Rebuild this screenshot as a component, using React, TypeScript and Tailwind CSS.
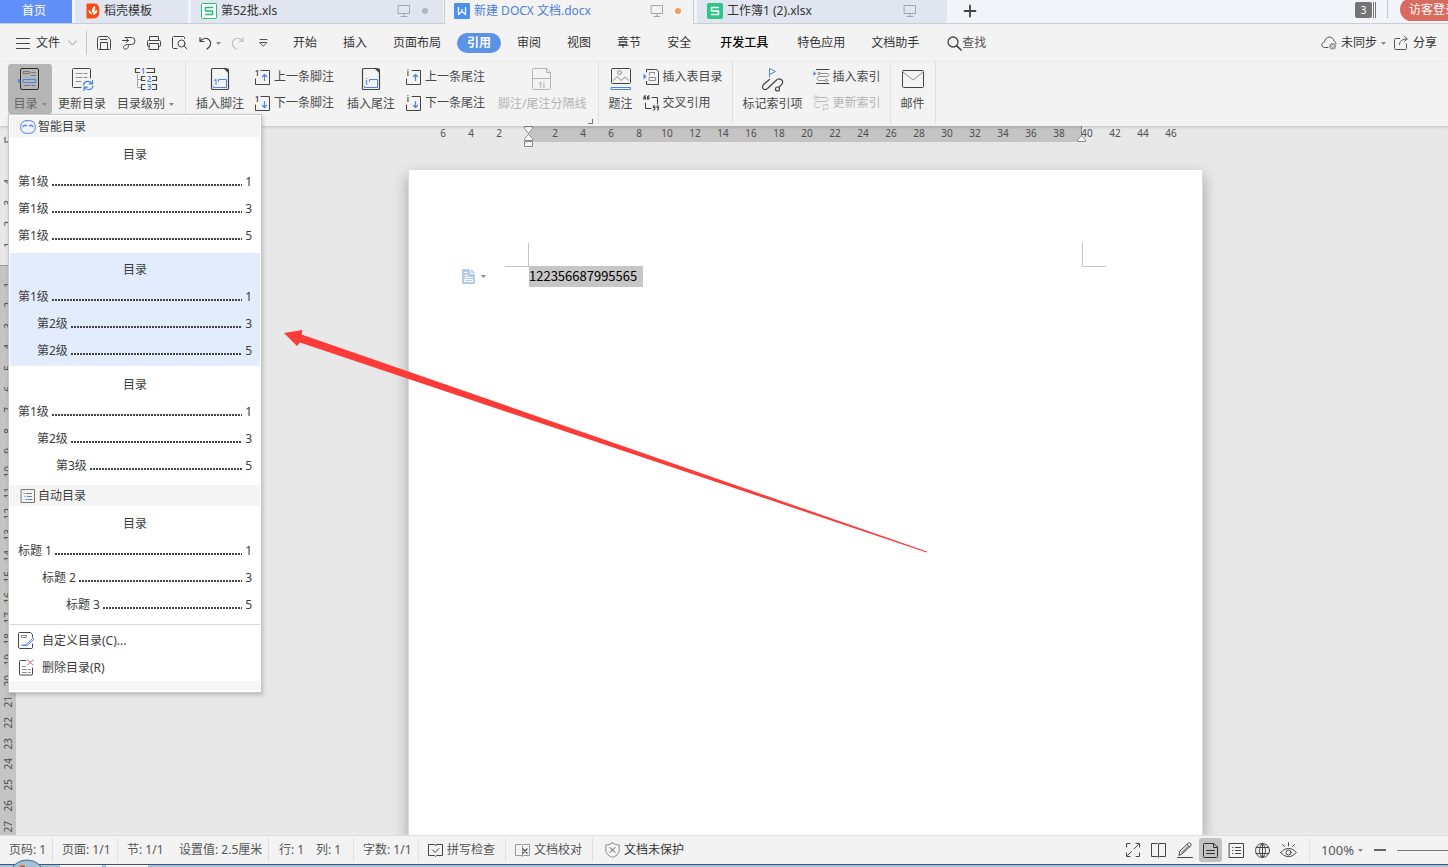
import React, { type ReactNode } from 'react';

const INK = '#444';
const BLUE = '#4a86e0';
const GREY = '#8f8f8f';

function Icon({ w, h, children, stroke = INK }: { w: number; h: number; children: ReactNode; stroke?: string }) {
  return (
    <svg
      width={w}
      height={h}
      viewBox={`0 0 ${w} ${h}`}
      fill="none"
      stroke={stroke}
      strokeWidth={1}
      strokeLinecap="round"
      strokeLinejoin="round"
      className="shrink-0 overflow-visible"
      aria-hidden="true"
    >
      {children}
    </svg>
  );
}

function Digit({ x, y, children, fill = BLUE, size = 8 }: { x: number; y: number; children: ReactNode; fill?: string; size?: number }) {
  return (
    <text x={x} y={y} fill={fill} stroke="none" fontSize={size} textAnchor="middle" fontWeight="600">
      {children}
    </text>
  );
}

function Caret() {
  return (
    <svg width="5" height="3" viewBox="0 0 5 3" className="shrink-0" aria-hidden="true">
      <path d="M0 0h5L2.500 3z" fill="#888" />
    </svg>
  );
}

/* ---------- tab strip ---------- */

function Monitor() {
  return (
    <Icon w={12} h={12} stroke="#a3a6ad">
      <path d="M.5.5h11v8H.5zM6 8.500v2.500M3 11.500h6" />
    </Icon>
  );
}

function SheetLogo({ filled }: { filled: boolean }) {
  return (
    <Icon w={16} h={16} stroke={filled ? '#fff' : '#1fbf7a'}>
      <rect x=".5" y=".5" width="15" height="15" rx="1" fill={filled ? '#2fc58a' : '#fff'} stroke={filled ? '#2fc58a' : '#1fbf7a'} />
      <path d="M11.500 4.500h-7v3.400h7v3.600h-7" strokeWidth="1.500" />
    </Icon>
  );
}

function WriterLogo() {
  return (
    <Icon w={16} h={16} stroke="#fff">
      <rect width="16" height="16" rx="1" fill="#4a90ee" stroke="none" />
      <path d="M4.500 4.500v7L8 8.500l3.500 3v-7M8 8.500v-2" strokeWidth="1.300" />
    </Icon>
  );
}

function DocerLogo() {
  return (
    <svg width="14" height="16" viewBox="0 0 14 16" className="shrink-0" aria-hidden="true">
      <path d="M1.500.5h7C12 .5 13.500 4 13.500 8s-2 7.500-6 7.500h-6c-.6 0-1-.4-1-1v-13c0-.6.4-1 1-1z" fill="#fa4b14" />
      <path d="M6 9.500C5.500 6.500 7 4 8.800 2.800c1 2 .4 5-1.300 7zM2.500 7.200c1.500 0 2.600 1 3 2.800l.3 1.500C3.800 11 2.500 9.500 2.500 7.200zM7 12c.3-2.800 2-4.600 4.500-5-.2 3-1.800 4.800-4.500 5z" fill="#fff" />
    </svg>
  );
}

function TabStrip() {
  return (
    <nav aria-label="文档标签" className="flex h-6 shrink-0 border-b border-[#c9cdd8] bg-[#f2f4f9]">
      <button className="flex w-[72px] items-center justify-center bg-[#608ffa] pr-1 pb-px text-white">首页</button>
      <button className="ml-[3px] flex w-[113px] items-center gap-1 bg-[#e1e5ef] pb-px pl-[11px]">
        <DocerLogo />
        稻壳模板
      </button>
      <button className="ml-[3px] flex w-[252px] items-center gap-1 bg-[#e1e5ef] pr-[15px] pb-px pl-[10px]">
        <SheetLogo filled={false} />
        <span className="flex-1 text-left">第52批.xls</span>
        <Monitor />
        <span className="ml-2 size-[6px] rounded-full bg-[#b4b7bf]" />
      </button>
      <button className="-mb-px ml-px flex w-[250px] items-center gap-1 border-x border-[#c9cdd8] bg-[#f3f3f3] pr-3 pb-[2px] pl-[9px] text-[#4a80dc]">
        <WriterLogo />
        <span className="flex-1 text-left">新建 DOCX 文档.docx</span>
        <Monitor />
        <span className="ml-2 size-[6px] rounded-full bg-[#e9a15c]" />
      </button>
      <button className="ml-[3px] flex w-[250px] items-center gap-1 bg-[#e1e5ef] pr-[31px] pb-px pl-[10px]">
        <SheetLogo filled />
        <span className="flex-1 text-left">工作簿1 (2).xlsx</span>
        <Monitor />
      </button>
      <button aria-label="新建标签" className="flex w-[46px] items-center justify-center pb-[2px]">
        <Icon w={12} h={12} stroke="#444">
          <path d="M6 .5v11M.5 6h11" strokeWidth="1.800" />
        </Icon>
      </button>
      <div className="ml-auto flex items-start">
        <button aria-label="标签列表" className="mt-[2px] flex h-4 items-center gap-px">
          <span className="flex h-4 w-[17px] items-center justify-center rounded-[2px] bg-[#747474] text-[10px] text-white">3</span>
          <span className="h-4 w-px bg-[#777]" />
          <span className="h-4 w-px bg-[#777]" />
        </button>
        <span className="ml-[11px] h-[18px] w-px bg-[#c4c6cc]" />
        <div className="ml-3 flex w-12 overflow-hidden">
          <button className="-mt-[2px] h-[23px] w-[72px] shrink-0 rounded-full bg-[#d96b5e] pl-[9px] text-left whitespace-nowrap text-white">访客登录</button>
        </div>
      </div>
    </nav>
  );
}

/* ---------- menu bar ---------- */

const menusBefore = ['开始', '插入', '页面布局'];
const menusAfter = ['审阅', '视图', '章节', '安全'];

function MenuItem({ label }: { label: string }) {
  return <button className="px-[13px] leading-5 whitespace-nowrap">{label}</button>;
}

function MenuBar() {
  return (
    <div className="flex h-[38px] shrink-0 items-center bg-[#f3f3f3] pl-4">
      <button className="flex items-center gap-[6px]">
        <Icon w={14} h={12}>
          <path d="M.5 1.500h13M.5 6.500h13M.5 11.500h13" />
        </Icon>
        文件
        <span className="ml-[2px] flex">
          <Icon w={9} h={6} stroke="#999">
            <path d="M.5.8l4 4.200 4-4.200" />
          </Icon>
        </span>
      </button>
      <span className="ml-[9px] h-6 w-px bg-[#c6c6c6]" />
      <div className="ml-[10px] flex items-center gap-[11px]">
        <button aria-label="保存">
          <Icon w={14} h={14}>
            <path d="M.5 2.500c0-1.200.8-2 2-2h8l3 3v9c0 .6-.4 1-1 1h-11c-.6 0-1-.4-1-1zM3.500 13.500v-7h7v7M3.500 3.500h6.500" />
          </Icon>
        </button>
        <button aria-label="输出为PDF">
          <Icon w={14} h={14}>
            <path d="M.5 4.500h6M4.500 2.500l2 2-2 2M3 1.500h6.500a3.500 3.500 0 0 1 0 7H7.500c-1 0-1 .5-1 1 0 4.500-5 4.500-5 2 0-2 2-3 6-3" />
          </Icon>
        </button>
        <button aria-label="打印">
          <Icon w={14} h={14}>
            <path d="M2.500 4.500v-4h9v4M2.500 10.500h-1c-.6 0-1-.4-1-1v-4c0-.6.400-1 1-1h11c.6 0 1 .4 1 1v4c0 .6-.4 1-1 1h-1M2.500 7.500h9v6h-9z" />
          </Icon>
        </button>
        <button aria-label="打印预览">
          <Icon w={16} h={14}>
            <path d="M5 12.500H1.500c-.6 0-1-.4-1-1v-10c0-.6.400-1 1-1h10c.6 0 1 .4 1 1v1M12 10l3 3" />
            <circle cx="9.500" cy="7.500" r="3.500" />
          </Icon>
        </button>
      </div>
      <button aria-label="撤销" className="ml-[11px] flex items-center gap-1">
        <Icon w={13} h={14}>
          <path d="M1 1.500v4h4M1.200 5.300C3.500 2.500 7 1.700 9.500 3.200c3 1.900 2.600 6 .4 8L8 13" strokeWidth="1.200" />
        </Icon>
        <Caret />
      </button>
      <button aria-label="恢复" className="ml-[10px]">
        <Icon w={13} h={14} stroke="#c0c0c0">
          <path d="M12 1.500v4H8M11.800 5.300C9.500 2.500 6 1.700 3.500 3.200c-3 1.900-2.600 6-.4 8L5 13" strokeWidth="1.200" />
        </Icon>
      </button>
      <button aria-label="更多" className="ml-[15px]">
        <Icon w={9} h={8} stroke="#555">
          <path d="M1 .5h7M1 3.500h7L4.500 7z" />
        </Icon>
      </button>
      <div className="ml-3 flex items-center">
        {menusBefore.map((m) => (
          <MenuItem key={m} label={m} />
        ))}
        <button className="mx-[3px] rounded-full bg-[#5c93e6] px-[10px] leading-5 font-bold whitespace-nowrap text-white">引用</button>
        {menusAfter.map((m) => (
          <MenuItem key={m} label={m} />
        ))}
        <button className="px-4 leading-5 font-medium whitespace-nowrap text-black">开发工具</button>
        <MenuItem label="特色应用" />
        <MenuItem label="文档助手" />
      </div>
      <button className="ml-[15px] flex items-center whitespace-nowrap text-[#555]">
        <Icon w={15} h={15}>
          <circle cx="6" cy="6" r="5" strokeWidth="1.300" />
          <path d="M9.800 9.800l4.200 4.200" strokeWidth="1.700" />
        </Icon>
        查找
      </button>
      <div className="ml-auto flex items-center pr-[11px] whitespace-nowrap">
        <button className="flex items-center gap-1">
          <Icon w={16} h={14} stroke="#555">
            <path d="M7 11.500H3.800C-.2 11.500 0 6.500 3.500 6 4.200-.3 12-.3 13 5c1.200.6 2 1.700 2 3" />
            <circle cx="11.700" cy="10.300" r="3.300" fill="#999" stroke="none" />
            <path d="M10.500 9.100l2.400 2.400m0-2.400l-2.400 2.400" stroke="#fff" strokeWidth=".9" />
          </Icon>
          未同步
          <Caret />
        </button>
        <button className="ml-2 flex items-center gap-[5px]">
          <Icon w={14} h={14} stroke="#555">
            <path d="M5.500 2.500h-4c-.6 0-1 .4-1 1v9c0 .6.400 1 1 1h10c.6 0 1-.4 1-1V8M5.500 8.500C5.500 5 8 3.200 13 3M10.500.5L13.200 3l-2.700 2.400" />
          </Icon>
          分享
        </button>
      </div>
    </div>
  );
}

/* ---------- ribbon ---------- */

function BigButton({ icon, label, muted, caret, className = '' }: { icon: ReactNode; label: string; muted?: boolean; caret?: boolean; className?: string }) {
  return (
    <button className={`flex h-[50px] flex-col items-center justify-between pt-[3px] pb-[2px] whitespace-nowrap ${muted ? 'text-[#b4b4b4]' : ''} ${className}`}>
      {icon}
      <span className="flex items-center gap-1 leading-4">
        {label}
        {caret && <Caret />}
      </span>
    </button>
  );
}

function SmallButton({ icon, label, muted }: { icon: ReactNode; label: string; muted?: boolean }) {
  return (
    <button className={`flex h-[26px] items-center gap-[3px] leading-4 whitespace-nowrap ${muted ? 'text-[#b4b4b4]' : ''}`}>
      {icon}
      {label}
    </button>
  );
}

function Divider() {
  return <span className="h-[62px] w-px shrink-0 bg-[#e0e0e0]" />;
}

function TocIcon() {
  return (
    <Icon w={24} h={24} stroke="#2d2d2d">
      <rect x="2.500" y="1.500" width="18" height="21" rx="1.500" />
      <path d="M5.500 4.500h6v2h-6zM13.500 5.500h4M13.500 8.500h4M6 18.500h6M14 18.500h3" stroke="#777" />
      <path d="M5.500 12.500h12v3h-12z" stroke={BLUE} />
      <path d="M0 11.500v5l3-2.500z" fill={BLUE} stroke="none" />
    </Icon>
  );
}

function RefreshTocIcon() {
  return (
    <Icon w={24} h={24}>
      <path d="M11 20.500H3.500c-.6 0-1-.4-1-1v-17c0-.6.400-1 1-1h16c.6 0 1 .4 1 1V11" />
      <path d="M6 6.500h6M14 6.500h3M6 10.500h6M14 10.500h3M6 14.500h5" stroke={GREY} />
      <path d="M13.500 18c.5-4 6-5 8.500-1.500M22.500 13.500v3.300h-3.300M23 19c-.5 4-6 5-8.500 1.500M14 23.500v-3.300h3.300" stroke={BLUE} strokeWidth="1.200" />
    </Icon>
  );
}

function LevelsIcon() {
  return (
    <Icon w={24} h={24}>
      <path d="M3.500 7v13.500h4M3.500 12.500h4" stroke="#aaa" />
      <path d="M5.500 1.500h-4v4h4M13 5.500h7.500v-4H13" strokeWidth="1.200" />
      <path d="M11 9.500H7.500v4H11M18.500 13.500h4v-4h-4" strokeWidth="1.200" />
      <path d="M11 17.500H7.500v5H11M18.500 22.500h4v-5h-4" strokeWidth="1.200" />
      <Digit x={9} y={6.500}>1</Digit>
      <Digit x={15} y={14.500}>2</Digit>
      <Digit x={15} y={23}>3</Digit>
    </Icon>
  );
}

function NoteIcon({ end }: { end?: boolean }) {
  return (
    <Icon w={24} h={24}>
      <path d="M16.500 1.500h-12c-.6 0-1 .4-1 1v19c0 .6.400 1 1 1h15c.6 0 1-.4 1-1v-16z" strokeWidth="1.200" />
      <path d="M16.500 1.500l4 4v-3z" fill={INK} />
      <path d="M10.500 14.500v-2h8v8h-13v-1" stroke={BLUE} />
      <Digit x={7.500} y={17.500}>{end ? 'i' : '1'}</Digit>
    </Icon>
  );
}

function StepIcon({ up, end }: { up?: boolean; end?: boolean }) {
  return (
    <Icon w={17} h={17}>
      <Digit x={3} y={7} fill={INK}>{end ? 'i' : '1'}</Digit>
      <path d="M7 1.500h8.500v14h-14V10" />
      <path d={up ? 'M10.500 11.500v-6M8.500 7.500l2-2 2 2' : 'M10.500 6.500v6M8.500 10.500l2 2 2-2'} stroke={BLUE} strokeWidth="1.200" />
    </Icon>
  );
}

function SeparatorNoteIcon() {
  return (
    <Icon w={24} h={24} stroke="#b4b4b4">
      <path d="M16.500 1.500h-13c-.6 0-1 .4-1 1v19c0 .6.400 1 1 1h16c.6 0 1-.4 1-1v-16zM16.500 1.500v4h4M3 11.500h17" />
      <Digit x={11.500} y={20.500} fill="#b4b4b4">1i</Digit>
    </Icon>
  );
}

function CaptionIcon() {
  return (
    <Icon w={22} h={24}>
      <rect x="1.500" y="1.500" width="19" height="15" rx="1" />
      <path d="M3 13.500l4.500-4 3.500 4 4-3.500 4 3.500" stroke={GREY} />
      <circle cx="9.500" cy="5.500" r="2" stroke={GREY} />
      <path d="M1.500 20.500h19v2h-19z" stroke={BLUE} />
    </Icon>
  );
}

function FigureListIcon() {
  return (
    <Icon w={17} h={16}>
      <path d="M3.500 3V.5h9c2 0 3 1 3 3v12h-12v-3" />
      <path d="M6.500 6V3.500h5V5M6.500 8.500h6v3h-6z" stroke={GREY} />
      <path d="M.5 4.500v6l3-3z" fill={BLUE} stroke="none" />
    </Icon>
  );
}

function CrossRefIcon() {
  return (
    <Icon w={17} h={16}>
      <path d="M9 2.500h5.500V9M2.500 8v5.500H8" />
      <path d="M2.500.8C1 1 .8 2.300.8 4h1.600V2.500M6 .8C4.500 1 4.300 2.300 4.300 4h1.600V2.500M12 11h-1.600v1.500H12c0 1-.4 2-1.200 2.500M15.700 11h-1.600v1.500h1.600c0 1-.4 2-1.200 2.500" strokeWidth="1.200" />
    </Icon>
  );
}

function MarkIndexIcon() {
  return (
    <Icon w={26} h={26}>
      <path d="M9.500 12.500L4 17c-3.500 3.500 0 7.500 3.500 4.500L16 13.500c3.500-3.500 8.500 0 6 3.500-.8 1.200-2 2-3.200 3.300" strokeWidth="1.200" />
      <circle cx="17.500" cy="22" r="2" strokeWidth="1.200" />
      <path d="M9.500 10V1.500l6 3-6 3" stroke={BLUE} />
    </Icon>
  );
}

function InsertIndexIcon() {
  return (
    <Icon w={17} h={16}>
      <path d="M3.500.5H16M3.500 14.500H16" />
      <path d="M7 4.500h7c2.500 0 2.500 3 0 3H6c-2.500 0-2.500 4 0 4h6" stroke={GREY} />
      <circle cx="6" cy="4.500" r="1.300" stroke={GREY} />
      <circle cx="13.500" cy="11.500" r="1.300" stroke={GREY} />
      <path d="M.5 2v5l2.700-2.500z" fill={BLUE} stroke="none" />
    </Icon>
  );
}

function RefreshIndexIcon() {
  return (
    <Icon w={17} h={16} stroke="#b8b8b8">
      <circle cx="3" cy="2.500" r="1.700" />
      <path d="M5 2.500h8c2.500 0 2.500 4 0 4H4c-3.500 0-3.500 6 0 6h2.500M9.500 11.500c.5-2 3.500-2.500 5-.7V9M15.500 12.500c-.5 2-3.500 2.500-5 .7V15" />
    </Icon>
  );
}

function MailIcon() {
  return (
    <Icon w={24} h={24}>
      <rect x="1.500" y="3.500" width="21" height="17" rx="1" />
      <path d="M2.500 5.500L12 13l9.500-7.500" stroke={GREY} />
    </Icon>
  );
}

function Ribbon() {
  return (
    <div className="relative z-20 flex h-16 shrink-0 items-start bg-[#f3f3f3] pl-2 text-[#4a4a4a] shadow-[0_1px_3px_rgba(0,0,0,0.18)]">
      <div className="relative mt-[2px]">
        <BigButton className="w-11 rounded-[3px] bg-[#b6b6b6] text-[#666]" icon={<TocIcon />} label="目录" caret />
        <TocMenu />
      </div>
      <div className="mt-[2px] flex">
        <BigButton className="w-[60px]" icon={<RefreshTocIcon />} label="更新目录" />
        <BigButton className="mr-[6px] w-[67px]" icon={<LevelsIcon />} label="目录级别" caret />
      </div>
      <Divider />
      <div className="mt-[2px] flex gap-[10px] pr-[11px] pl-[10px]">
        <BigButton icon={<NoteIcon />} label="插入脚注" />
        <div>
          <SmallButton icon={<StepIcon up />} label="上一条脚注" />
          <SmallButton icon={<StepIcon />} label="下一条脚注" />
        </div>
        <BigButton className="ml-[3px]" icon={<NoteIcon end />} label="插入尾注" />
        <div>
          <SmallButton icon={<StepIcon up end />} label="上一条尾注" />
          <SmallButton icon={<StepIcon end />} label="下一条尾注" />
        </div>
        <div className="relative ml-[3px]">
          <BigButton icon={<SeparatorNoteIcon />} label="脚注/尾注分隔线" muted />
          <span className="absolute -right-[6px] -bottom-2 size-[5px] border-r border-b border-[#777]" />
        </div>
      </div>
      <Divider />
      <div className="mt-[2px] flex gap-[10px] pr-[9px] pl-[10px]">
        <BigButton icon={<CaptionIcon />} label="题注" />
        <div>
          <SmallButton icon={<FigureListIcon />} label="插入表目录" />
          <SmallButton icon={<CrossRefIcon />} label="交叉引用" />
        </div>
      </div>
      <Divider />
      <div className="mt-[2px] flex gap-[10px] pr-[9px] pl-[10px]">
        <BigButton icon={<MarkIndexIcon />} label="标记索引项" />
        <div>
          <SmallButton icon={<InsertIndexIcon />} label="插入索引" />
          <SmallButton icon={<RefreshIndexIcon />} label="更新索引" muted />
        </div>
      </div>
      <Divider />
      <div className="mt-[2px] flex px-[10px]">
        <BigButton icon={<MailIcon />} label="邮件" />
      </div>
      <Divider />
    </div>
  );
}

/* ---------- table-of-contents menu ---------- */

type Line = { text: string; page: number; pad: string };

const flat: Line[] = [
  { text: '第1级', page: 1, pad: 'pl-2' },
  { text: '第1级', page: 3, pad: 'pl-2' },
  { text: '第1级', page: 5, pad: 'pl-2' },
];
const twoLevels: Line[] = [
  { text: '第1级', page: 1, pad: 'pl-2' },
  { text: '第2级', page: 3, pad: 'pl-[27px]' },
  { text: '第2级', page: 5, pad: 'pl-[27px]' },
];
const threeLevels: Line[] = [
  { text: '第1级', page: 1, pad: 'pl-2' },
  { text: '第2级', page: 3, pad: 'pl-[27px]' },
  { text: '第3级', page: 5, pad: 'pl-[46px]' },
];
const headings: Line[] = [
  { text: '标题 1', page: 1, pad: 'pl-2' },
  { text: '标题 2', page: 3, pad: 'pl-8' },
  { text: '标题 3', page: 5, pad: 'pl-[56px]' },
];

function TocPreview({ lines, active }: { lines: Line[]; active?: boolean }) {
  return (
    <button role="menuitem" className={`flex w-full flex-col pt-[3px] pb-[2px] leading-[27px] ${active ? 'bg-[#e2ecfd]' : ''}`}>
      <span className="w-full text-center">目录</span>
      {lines.map((l, i) => (
        <span key={i} className={`flex w-full items-center pr-2 ${l.pad}`}>
          {l.text}
          <span className="mx-[3px] mt-[7px] h-[2px] flex-1 bg-[repeating-linear-gradient(90deg,#444_0_2px,transparent_2px_3px)]" />
          {l.page}
        </span>
      ))}
    </button>
  );
}

function MenuHeading({ icon, label }: { icon: ReactNode; label: string }) {
  return (
    <div className="flex h-[21px] items-center bg-[#f4f4f4] pl-2">
      <span className="flex w-5 justify-center">{icon}</span>
      {label}
    </div>
  );
}

function TocMenu() {
  return (
    <div role="menu" className="absolute top-full left-0 w-[254px] border border-[#c8c8c8] bg-white p-px text-[#3c3c3c] shadow-[1px_2px_4px_rgba(0,0,0,0.2)]">
      <MenuHeading
        icon={
          <Icon w={16} h={14} stroke="#4d84f0">
            <rect x=".7" y=".7" width="14.600" height="12.600" rx="5.500" />
            <path d="M3 6.500l2-1.300 1.500.8M9.500 6l1.500-.8 2 1.300" strokeWidth="1.400" />
          </Icon>
        }
        label="智能目录"
      />
      <div className="mt-px mb-1 flex flex-col gap-[2px]">
        <TocPreview lines={flat} />
        <TocPreview lines={twoLevels} active />
        <TocPreview lines={threeLevels} />
      </div>
      <MenuHeading
        icon={
          <Icon w={14} h={14} stroke="#777">
            <path d="M.5.5h13v13H.5zM3 4.500h.5M5.500 4.500h5M5 10.500h.5M7 10.500h4" />
            <path d="M4 7.500h.5M6.500 7.500h4" stroke="#4d84f0" />
          </Icon>
        }
        label="自动目录"
      />
      <div className="mt-px mb-1">
        <TocPreview lines={headings} />
      </div>
      <div className="border-t border-[#d9d9d9] pt-[2px]">
        <button role="menuitem" className="flex h-[27px] w-full items-center gap-2 pl-2">
          <Icon w={16} h={17}>
            <path d="M14.500 12v3.500c0 .6-.4 1-1 1H2l-1.500-1V1.500c0-.6.400-1 1-1h11l2 2V5" />
            <path d="M3.500 3.500h5v2h-5z" stroke={GREY} />
            <path d="M3.500 13h4l7.500-7 .8 1.500L9 13.500H5" stroke={BLUE} />
          </Icon>
          自定义目录(C)...
        </button>
        <button role="menuitem" className="flex h-[27px] w-full items-center gap-2 pl-2">
          <Icon w={16} h={17}>
            <path d="M8 1.500H2.500c-.6 0-1 .4-1 1v12.500c0 .6.400 1 1 1h11c.6 0 1-.4 1-1V9" />
            <path d="M4.500 7.500h3M4.500 10.500h4M10.500 10.500h2M4.500 13.500h4M10.500 13.500h2" stroke={GREY} />
            <path d="M9.500 1l5.500 5M15 1L9.500 6" stroke="#e0605c" />
          </Icon>
          删除目录(R)
        </button>
      </div>
      <div className="mb-px h-[9px] bg-[#f6f6f6]" />
    </div>
  );
}

/* ---------- workspace ---------- */

const rulerMarks = ['6', '4', '2', '', ...Array.from({ length: 23 }, (_, i) => String((i + 1) * 2))];
const sideMarksUp = ['4', '3', '2', '1'];
const sideMarksDown = Array.from({ length: 27 }, (_, i) => String(i + 1));

function SideMark({ label }: { label: string }) {
  return (
    <span className="flex flex-1 items-center justify-center">
      <span className="rotate-180 leading-none [writing-mode:vertical-rl]">{label}</span>
    </span>
  );
}

function Workspace() {
  return (
    <main className="relative flex min-h-0 flex-1 overflow-hidden bg-[#e8e8e8]">
      <div className="flex w-4 shrink-0 flex-col text-[10px] text-[#4f4f4f]">
        <div className="flex h-[45px] shrink-0 pt-[11px] pl-1">
          <span className="size-[6px] border-b-2 border-l-2 border-[#999]" />
        </div>
        <div className="flex h-[84px] shrink-0 flex-col">
          {sideMarksUp.map((m) => (
            <SideMark key={m} label={m} />
          ))}
        </div>
        <div className="mt-[10px] flex min-h-0 flex-1 flex-col border-t border-[#999] bg-[#c4c4c4] pt-2">
          <div className="flex h-[563px] shrink-0 flex-col">
            {sideMarksDown.map((m) => (
              <SideMark key={m} label={m} />
            ))}
          </div>
        </div>
      </div>
      <div className="flex min-w-0 flex-1 flex-col">
        <div className="relative flex h-4 shrink-0 bg-[linear-gradient(90deg,transparent_512px,#c4c4c4_512px_1066px,transparent_1066px)] pl-[413px] text-[10px] leading-[15px] text-[#4f4f4f]">
          {rulerMarks.map((m, i) => (
            <span key={i} className="w-7 shrink-0 text-center">
              {m}
            </span>
          ))}
          <svg width="10" height="22" viewBox="0 0 10 22" className="absolute top-0 left-[508px]" fill="#f8f8f8" stroke="#888" aria-hidden="true">
            <path d="M.5.500h8v2L4.500 7.500l-4-5zM4.500 8.500l4 4v2h-8v-2zM.5 15.500h8v5h-8z" />
          </svg>
          <svg width="10" height="17" viewBox="0 0 10 17" className="absolute top-0 left-[1061px]" fill="#f8f8f8" stroke="#888" aria-hidden="true">
            <path d="M4.500 0v10l4 3.500v2h-8v-2l4-3.500" />
          </svg>
        </div>
        <article className="mt-7 ml-[392px] flex w-[795px] flex-1 flex-col border-x border-[#dcdcdc] bg-white pt-[73px] shadow-[0_6px_14px_rgba(0,0,0,0.32)]">
          <div className="flex justify-between px-24">
            <span className="size-6 border-r border-b border-[#c4c4c4]" />
            <span className="size-6 border-b border-l border-[#c4c4c4]" />
          </div>
          <div className="-mt-px flex h-[21px] items-center pl-[53px]">
            <button aria-label="目录选项" className="flex w-[67px] items-center gap-[6px]">
              <svg width="13" height="15" viewBox="0 0 13 15" aria-hidden="true">
                <path d="M0 0h9l4 4v11H0z" fill="#b5cbea" />
                <path d="M8.500 0v4.500H13M2.500 3.500h3M2.500 6.500h4M2.500 8.500h8M2.500 10.500h8v2h-8z" fill="none" stroke="#fff" />
              </svg>
              <Caret />
            </button>
            <p className="h-[21px] bg-[#c6c6c6] pr-[6px] font-['Noto_Sans_CJK_SC',sans-serif] text-[13px] leading-5 text-black">122356687995565</p>
          </div>
        </article>
      </div>
      <svg width="650" height="230" viewBox="0 0 650 230" className="absolute top-[199px] left-[280px]" aria-hidden="true">
        <path d="M4 8L22.500 5l-1 4.500L647 226.500l-.4 1L20 17.500 17 21z" fill="#fc3a38" />
      </svg>
    </main>
  );
}

/* ---------- status bar ---------- */

function StatusDivider() {
  return <span className="h-6 w-px shrink-0 bg-[#e0e0e0]" />;
}

function StatusBar() {
  return (
    <footer className="flex h-[29px] shrink-0 items-center border-t border-[#dedede] bg-[#f3f3f3] whitespace-nowrap text-[#555]">
      <span className="w-[52px] pl-[9px]">页码: 1</span>
      <StatusDivider />
      <span className="w-16 pl-[9px]">页面: 1/1</span>
      <StatusDivider />
      <span className="w-[61px] pl-[9px]">节: 1/1</span>
      <span className="w-[89px]">设置值: 2.5厘米</span>
      <StatusDivider />
      <span className="w-[47px] pl-[10px]">行: 1</span>
      <span className="w-[37px]">列: 1</span>
      <StatusDivider />
      <span className="w-16 pl-[9px]">字数: 1/1</span>
      <StatusDivider />
      <button className="flex w-[86px] items-center gap-1 pl-[9px]">
        <Icon w={15} h={13}>
          <path d="M7.500 1.500l-1-1h-6v11h6l1 1 1-1h6V.5h-6zM4.500 6L7 8.500 11 4.500" />
        </Icon>
        拼写检查
      </button>
      <StatusDivider />
      <button className="flex w-[86px] items-center gap-1 pl-[9px]">
        <Icon w={15} h={13} stroke="#999">
          <path d="M7.500 12V1.500l-1-1h-6v11h6l1 1 1-1h6V.5h-6l-1 1" />
          <path d="M8 5l4 4M12 5L8 9" stroke="#444" strokeWidth="1.200" />
        </Icon>
        文档校对
      </button>
      <StatusDivider />
      <button className="flex items-center gap-1 pl-3 text-[#333]">
        <Icon w={15} h={16} stroke="#888">
          <path d="M7.500.7C5.500 2.500 3 3 .8 3v5c0 4 3.700 6.500 6.700 7.300 3-.8 6.700-3.300 6.700-7.300V3c-2.200 0-4.700-.5-6.700-2.300z" />
          <path d="M5 5.500l5 5M10 5.500l-5 5" stroke="#555" />
        </Icon>
        文档未保护
      </button>
      <div className="ml-auto flex items-center">
        <button aria-label="全屏显示" className="flex w-[26px] justify-center">
          <Icon w={14} h={14}>
            <path d="M.5 4V.5H4M10 .5h3.500V4M13.500 10v3.500H10M4 13.500H.5V10M8.500 5.500l4-4M1.500 12.500l4-4" />
          </Icon>
        </button>
        <button aria-label="阅读版式" className="flex w-[26px] justify-center">
          <Icon w={16} h={15}>
            <path d="M7.500 1.500l-1-1h-6v13h6l1 1 1-1h6V.5h-6zv12" />
          </Icon>
        </button>
        <button aria-label="写作模式" className="mr-px flex w-[26px] justify-center">
          <Icon w={16} h={16}>
            <path d="M2 13l1-4 8.500-8c1.500-.5 3 1 2.500 2.500l-8.500 8zM10 2.500l2.500 2.500M5 10.500l6-6M.5 15.500h15" />
          </Icon>
        </button>
        <button aria-label="页面视图" className="flex h-6 w-[23px] items-center justify-center rounded-[3px] bg-[#c2c2c2]">
          <Icon w={15} h={15} stroke="#2f2f2f">
            <path d="M1.500.5h9.500l3.500 3.500v9.500c0 .6-.4 1-1 1h-12c-.6 0-1-.4-1-1v-12c0-.6.400-1 1-1zM3.500 7.500h8M3.500 10.500h8M10.500.5v4h4" />
          </Icon>
        </button>
        <button aria-label="大纲" className="flex w-[29px] justify-center">
          <Icon w={15} h={15}>
            <path d="M.5.5h14v14H.5zM3.500 4.500h.5M6.500 4.500h5M3.500 7.500h.5M6.500 7.500h5M3.500 10.500h.5M6.500 10.500h5" />
          </Icon>
        </button>
        <button aria-label="Web版式" className="flex w-[23px] justify-center">
          <Icon w={15} h={15}>
            <circle cx="7.500" cy="7.500" r="7" />
            <path d="M7.500.5v14M1.500 4.500h12M1.500 10.500h12M7.500.5c-4 3.500-4 10.500 0 14 4-3.500 4-10.500 0-14" />
          </Icon>
        </button>
        <button aria-label="护眼模式" className="flex w-[29px] justify-center">
          <Icon w={17} h={16}>
            <path d="M.8 10.500c4-5.500 11.400-5.500 15.400 0-4 5.500-11.400 5.500-15.400 0zM8.500.8v3M2.500 2.500l2 2M14.500 2.500l-2 2" />
            <circle cx="8.500" cy="10.500" r="2.500" />
          </Icon>
        </button>
        <span className="ml-[6px] flex">
          <StatusDivider />
        </span>
        <button className="ml-[11px] flex items-center gap-1 text-[13px]">
          100%
          <Caret />
        </button>
        <button aria-label="缩小" className="ml-[11px] h-[2px] w-3 bg-[#666]" />
        <div className="ml-[11px] flex w-[51px] items-center overflow-hidden">
          <input
            type="range"
            aria-label="缩放"
            defaultValue={50}
            className="h-px w-[144px] shrink-0 appearance-none bg-[#777] [&::-webkit-slider-thumb]:size-3 [&::-webkit-slider-thumb]:appearance-none [&::-webkit-slider-thumb]:rounded-full [&::-webkit-slider-thumb]:bg-[#777]"
          />
        </div>
      </div>
    </footer>
  );
}

function Taskbar() {
  return (
    <div className="relative flex h-[3px] shrink-0 border-t border-[#47525e] bg-[#a6c1e2] pl-[60px]">
      <span className="w-[42px] bg-[#eef4f8]" />
      <span className="ml-1 w-[42px] bg-[#eef4f8]" />
      <svg width="32" height="8" viewBox="0 0 32 8" className="absolute bottom-0 left-[11px]" aria-hidden="true">
        <ellipse cx="16" cy="14" rx="16" ry="13" fill="#a4bfd4" stroke="#3f6d92" />
        <path d="M8 8c2-2 4-2 6-1v1z" fill="#d0532c" />
      </svg>
    </div>
  );
}

export default function App() {
  return (
    <div className="flex h-screen flex-col overflow-hidden font-['Noto_Sans','Noto_Sans_CJK_SC',sans-serif] text-[12px] leading-4 text-[#333]">
      <TabStrip />
      <MenuBar />
      <Ribbon />
      <Workspace />
      <StatusBar />
      <Taskbar />
    </div>
  );
}
